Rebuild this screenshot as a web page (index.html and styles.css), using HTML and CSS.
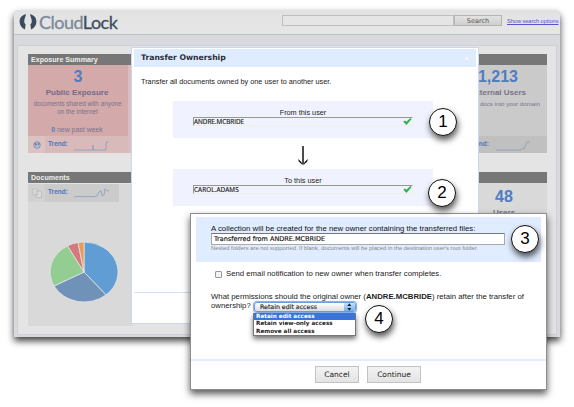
FILE: index.html
```html
<!DOCTYPE html>
<html lang="en">
<head>
<meta charset="utf-8">
<title>CloudLock - Transfer Ownership</title>
<link rel="stylesheet" href="styles.css">
</head>
<body>
<main class="window">
  <header class="topbar">
    <svg class="logo-mark" viewBox="0 0 18 16" width="18" height="16"><path d="M7 .3C2.800 1 .6 4 .6 7.600c0 3.800 2 6.500 5.400 8L6.600 10.300C5.300 9.500 5 7.800 5.400 6 5.600 3.400 6.900 2.300 7 .3z"/><path d="M11 .3c4.200.7 6.400 3.700 6.400 7.300 0 3.800-2 6.500-5.400 8l-.6-5.300c1.300-.8 1.600-2.500 1.200-4.300C12.400 3.400 11.100 2.300 11 .3z"/></svg>
    <h1 class="brand"><span>Cloud</span>Lock</h1>
    <div class="search"><div class="search-field"></div><div class="search-button">Search</div></div>
    <a class="options">Show search options</a>
  </header>
  <div class="board">
    <div class="column left">
      <h2 class="bar">Exposure Summary</h2>
      <section class="exposure">
        <div class="figure">3</div>
        <div class="label">Public Exposure</div>
        <div class="note">documents shared with anyone<br>on the internet</div>
        <div class="recent"><b>0</b> new past week</div>
        <div class="trend pink">
          <div class="icon-cell"><svg width="8" height="8" viewBox="0 0 8 8"><circle cx="4" cy="4" r="3.300" fill="#b9bed0" stroke="#7787a8" stroke-width=".8"/><path d="M1.500 2l2 .3.500 2-1.500.5zM5 1.500l1.500 1-.5 2L5 4z" fill="#667ba5"/></svg></div>
          <div class="trend-body"><span>Trend:</span><svg width="36" height="12" viewBox="0 0 36 12"><path d="M0 10h19V5v5h13V2h2.500" /></svg></div>
        </div>
      </section>
      <h2 class="bar docs">Documents</h2>
      <section class="documents">
        <div class="trend gray">
          <div class="icon-cell"><svg width="10" height="10" viewBox="0 0 10 10"><path d="M1 1h4l1 1v5H1zM4 3h4l1.500 1.500V9.500H4z" fill="#ddd" stroke="#b4b4b4" stroke-width=".7"/></svg></div>
          <div class="trend-body"><span>Trend:</span><svg width="36" height="12" viewBox="0 0 36 12"><path d="M0 9l5-.7 4 .4 5-.3 6 .4 3-1 2-4 2-1 1 5 2-1 1-6 2 2h2"/></svg></div>
        </div>
        <svg class="pie" width="70" height="62" viewBox="-35 -31 70 62"><g stroke="#e4e4e4" stroke-width=".8"><path d="M0 0V-30A34 30 0 0 1 22 22.900z" fill="#609dd4"/><path d="M0 0L22 22.900A34 30 0 0 1-30 14z" fill="#7092b8"/><path d="M0 0L-30 14A34 30 0 0 1-16.500-26.200z" fill="#93cd91"/><path d="M0 0L-16.500-26.200A34 30 0 0 1-6-29.500z" fill="#d27a7c"/><path d="M0 0L-6-29.500A34 30 0 0 1 0-30z" fill="#e59c57"/></g></svg>
      </section>
    </div>
    <div class="column right">
      <h2 class="bar"></h2>
      <section class="exposure">
        <div class="figure">1,213</div>
        <div class="label">External Users</div>
        <div class="note">docs into your domain</div>
        <div class="trend">
          <div class="trend-body"><span>Trend:</span><svg width="36" height="12" viewBox="0 0 36 12"><path d="M0 10h25l2-2 1 1 2-5 1-2h3"/></svg></div>
        </div>
      </section>
      <h2 class="bar docs"></h2>
      <section class="documents"><div class="figure">48</div><div class="label">Users</div></section>
    </div>
  </div>
</main>

<section class="modal">
  <header class="modal-head"><h2>Transfer Ownership</h2><span>×</span></header>
  <p class="intro">Transfer all documents owned by one user to another user.</p>
  <div class="user-box"><label>From this user</label><div class="user-field"><span>ANDRE.MCBRIDE</span><svg width="9" height="7" viewBox="0 0 9 7"><path d="M.3 3.800L2 2.400l1.400 1.300L7.300.1l1.300.8-5.100 6z"/></svg></div></div>
  <svg class="arrow" width="10" height="20" viewBox="0 0 10 20"><path d="M5 0v18" fill="none" stroke="#111" stroke-width="1.500"/><path d="M.3 13Q3.200 15 5 19.500 6.800 15 9.700 13L9.300 15.500 5 19.500 .7 15.500z" fill="#111"/></svg>
  <div class="user-box"><label>To this user</label><div class="user-field"><span class="carol">CAROL.ADAMS</span><svg width="9" height="7" viewBox="0 0 9 7"><path d="M.3 3.800L2 2.400l1.400 1.300L7.300.1l1.300.8-5.100 6z"/></svg></div></div>
  <div class="modal-rule"></div>
</section>

<section class="detail">
  <div class="collection">
    <label>A collection will be created for the new owner containing the transferred files:</label>
    <div class="name-field">Transferred from ANDRE.MCBRIDE</div>
    <p>Nested folders are not supported. If blank, documents will be placed in the destination user's root folder.</p>
  </div>
  <div class="notify"><i></i><span>Send email notification to new owner when transfer completes.</span></div>
  <div class="question">What permissions should the original owner (<b>ANDRE.MCBRIDE</b>) retain after the transfer of</div>
  <div class="permission"><span class="ask">ownership?</span>
    <div class="select"><span>Retain edit access</span><svg width="11" height="10" viewBox="0 0 11 10"><path d="M3.300 4l2-2.700 2 2.700zM3.300 6l2 2.700 2-2.700z" fill="#17263d"/></svg></div>
    <ul class="menu"><li class="on">Retain edit access</li><li>Retain view-only access</li><li>Remove all access</li></ul>
  </div>
  <footer><div class="button cancel">Cancel</div><div class="button">Continue</div></footer>
</section>

<span class="badge one">1</span>
<span class="badge two">2</span>
<span class="badge three">3</span>
<span class="badge four">4</span>
</body>
</html>
```
FILE: styles.css
```css
* { box-sizing: border-box; margin: 0; padding: 0; }
body { width: 574px; height: 407px; overflow: hidden; background: #fff; font-family: "Liberation Sans", sans-serif; font-size: 7.5px; line-height: 9px; color: #222; white-space: nowrap; position: relative; }
svg { display: block; flex: none; }

.window { width: 546px; height: 327px; margin: 10px 0 0 14px; background: #d8dae0; border-radius: 5px 5px 0 0; box-shadow: 0 4px 7px rgba(0,0,0,.75); overflow: hidden; }
.topbar { height: 25px; background: linear-gradient(#e2e2e2, #e6e6e6); border-bottom: 1px solid #bfc0c4; display: flex; padding-left: 5px; }
.logo-mark { margin-top: 4px; fill: #394b5d; }
.brand { width: 243px; margin: 2px 0 0 2px; font: 400 18px/20px Lato, sans-serif; letter-spacing: -.52px; color: #3e4d5d; -webkit-text-stroke: .3px #3e4d5d; }
.brand span { color: #7b899a; -webkit-text-stroke-color: #7b899a; }
.search { display: flex; margin-top: 5px; height: 11px; }
.search-field { width: 172px; border: 1px solid #bfbfbf; background: #e5e5e5; }
.search-button { width: 48px; border: 1px solid #b5b5b5; background: linear-gradient(#e2e2e2, #cfcfcf); text-align: center; font: 6.5px/10px "DejaVu Sans", sans-serif; color: #555; }
.options { margin: 7px 0 0 5px; font-size: 5.700px; color: #5750cf; text-decoration: underline; letter-spacing: -.07px; }

.board { margin: 10px 3px 0; height: 290px; border: 1px solid #cfd0d3; background: #e4e4e4; display: flex; justify-content: space-between; padding: 8px 9px 0 10px; }
.column.left { width: 105px; }
.column.right { width: 86px; }
.bar { height: 11px; background: #777; color: #eee; font: bold 7.100px/12px "Liberation Sans", sans-serif; padding-left: 3px; }
.bar.docs { margin-top: 19px; }
.exposure { height: 88px; background: #d3a9aa; border-right: 5px solid #dcbdbe; text-align: center; color: #7a7390; display: flex; flex-direction: column; }
.figure { font: bold 16px/16px "Liberation Sans", sans-serif; color: #4e7cc5; padding-top: 4px; height: 20px; }
.label { font: bold 8px/10px "Liberation Sans", sans-serif; margin-top: 3px; color: #736a8a; }
.exposure .label, .exposure .recent { padding-right: 2px; }
.note { font-size: 6.370px; line-height: 8px; margin-top: 2px; padding-right: 1px; }
.recent { font-size: 6.950px; line-height: 8px; margin-top: 10px; }
.recent b { color: #4e7cc5; }
.trend { margin-top: auto; height: 17px; display: flex; background: #c0c0c0; }
.trend.pink { background: #d9babb; }
.icon-cell { width: 17px; display: flex; justify-content: center; align-items: center; background: rgba(255,255,255,.12); }
.trend-body { display: flex; padding-left: 3px; color: #4e74bd; font: bold 6.500px/16px "Liberation Sans", sans-serif; }
.trend-body span { width: 26px; text-align: left; }
.trend-body svg { margin-top: 4px; fill: none; stroke: #87a0bd; stroke-width: .8; }
.documents { height: 142px; background: #d9d9d9; }
.trend.gray { margin: 1px 0 0; width: 91px; height: 18px; background: #cbcbcb; }
.gray .trend-body { line-height: 16px; }
.pie { margin: 39px 0 0 21px; }
.right .exposure { background: #cacaca; border: 0; }
.right .exposure .figure, .right .exposure .label { padding-right: 12px; }
.right .label { color: #777389; }
.right .note { font-size: 6.150px; text-align: right; padding-right: 7px; margin-top: 2px; }
.right .trend { padding-left: 3px; }
.right .trend-body { padding-left: 5px; }
.right .trend-body svg { margin-left: 1px; }
.right .documents { text-align: center; }
.right .documents .figure { padding-top: 6px; height: 22px; }
.right .documents .label { margin-top: 3px; }

.modal { position: absolute; left: 131px; top: 47px; width: 348px; height: 277px; border: 1px solid #c6d9f1; background: #fff; padding: 1px; display: flex; flex-direction: column; }
.modal-head { height: 18px; background: #dfecff; margin: 0 1px; padding: 0 7px; display: flex; justify-content: space-between; align-items: center; color: #fff; }
.modal-head h2 { font: bold 7.700px/18px "DejaVu Sans", sans-serif; color: #272d38; }
.intro { margin: 10px 0 0 8px; font-size: 7.300px; }
.user-box { margin: 15px 0 0 40px; width: 260px; height: 37px; background: #f0f3ff; padding: 7px 20px 0; display: flex; flex-direction: column; }
.user-box label { text-align: center; font-size: 7.300px; line-height: 9px; }
.user-field { height: 9px; border: 1px solid #eef0e6; border-top-color: #969a8d; border-left-color: #969a8d; display: flex; justify-content: space-between; font: 6.350px/8px "Open Sans", sans-serif; color: #111; -webkit-text-stroke: .15px #111; }
.user-field .carol { letter-spacing: .1px; }
.user-field svg { fill: #2fb34a; }
.arrow { margin: 8px 0 0 165px; }
.arrow + .user-box { margin-top: 3px; }
.modal-rule { height: 1px; background: #cfe0f7; margin: 86px 1px 0; }

.detail { position: absolute; left: 190px; top: 213px; width: 357px; height: 177px; border: 1px solid #8e8e8e; background: #fff; box-shadow: 0 4px 7px rgba(0,0,0,.65); display: flex; flex-direction: column; }
.collection { margin: 3px 5px 0; height: 45px; background: #e0ecff; padding: 7px 0 0 15px; }
.collection label { display: block; font-size: 7.800px; line-height: 9px; color: #111; }
.name-field { width: 294px; height: 12px; border: 1px solid #aaa; border-top-color: #777; background: #fff; padding-left: 2px; font: 6.500px/11px "DejaVu Sans", sans-serif; color: #111; -webkit-text-stroke: .15px #111; }
.collection p { font-size: 5.830px; line-height: 7px; color: #888; }
.notify { display: flex; margin: 7px 0 0 24px; gap: 4px; font-size: 7.770px; }
.notify i { width: 7px; height: 7px; margin-top: 2px; border: 1px solid #999; border-radius: 1px; background: #f2f2f2; }
.question { margin: 14px 0 0 20px; font-size: 7.780px; line-height: 9px; }
.permission { margin-left: 20px; height: 49px; display: flex; position: relative; font-size: 7.780px; line-height: 10px; }
.ask { width: 40px; }
.select { margin: 1px 0 0 3px; width: 102px; height: 10px; border: 1px solid #6d9be0; border-radius: 3px; box-shadow: 0 0 1px 1px #80abe8; background: linear-gradient(#fff, #dedede); display: flex; justify-content: space-between; font: 6.250px/8px "DejaVu Sans", sans-serif; padding-left: 5px; overflow: hidden; -webkit-text-stroke: .15px #222; }
.select svg { background: linear-gradient(#d4e7fb, #69acee); margin-top: -1px; }
.menu { position: absolute; left: 42px; top: 12px; width: 103px; height: 23px; list-style: none; border: 1px solid #777; border-top: 0; background: #fff; font: bold 5.700px/7.300px "DejaVu Sans", sans-serif; box-shadow: 0 3px 5px rgba(0,0,0,.55); color: #222; }
.menu li { padding-left: 2px; }
.menu .on { background: #3875d7; color: #fff; }
.detail footer { margin-top: auto; height: 30px; border-top: 2px solid #e0ecff; padding-top: 5px; display: flex; gap: 8px; padding-left: 124px; }
.button { width: 54px; height: 17px; border: 1px solid #c3c3c3; background: linear-gradient(#f3f3f3, #e3e3e3); text-align: center; font: 7.500px/15px "DejaVu Sans", sans-serif; }
.button.cancel { width: 44px; }

.badge { position: absolute; width: 28px; height: 28px; border: 1.500px solid #111; border-radius: 50%; background: #fff; text-align: center; font: 17px/25px "Liberation Sans", sans-serif; color: #000; box-shadow: 1px 4px 6px rgba(0,0,0,.65); }
.one { left: 429px; top: 108px; }
.two { left: 428px; top: 179px; }
.three { left: 511px; top: 225px; }
.four { left: 365px; top: 305px; }
```
